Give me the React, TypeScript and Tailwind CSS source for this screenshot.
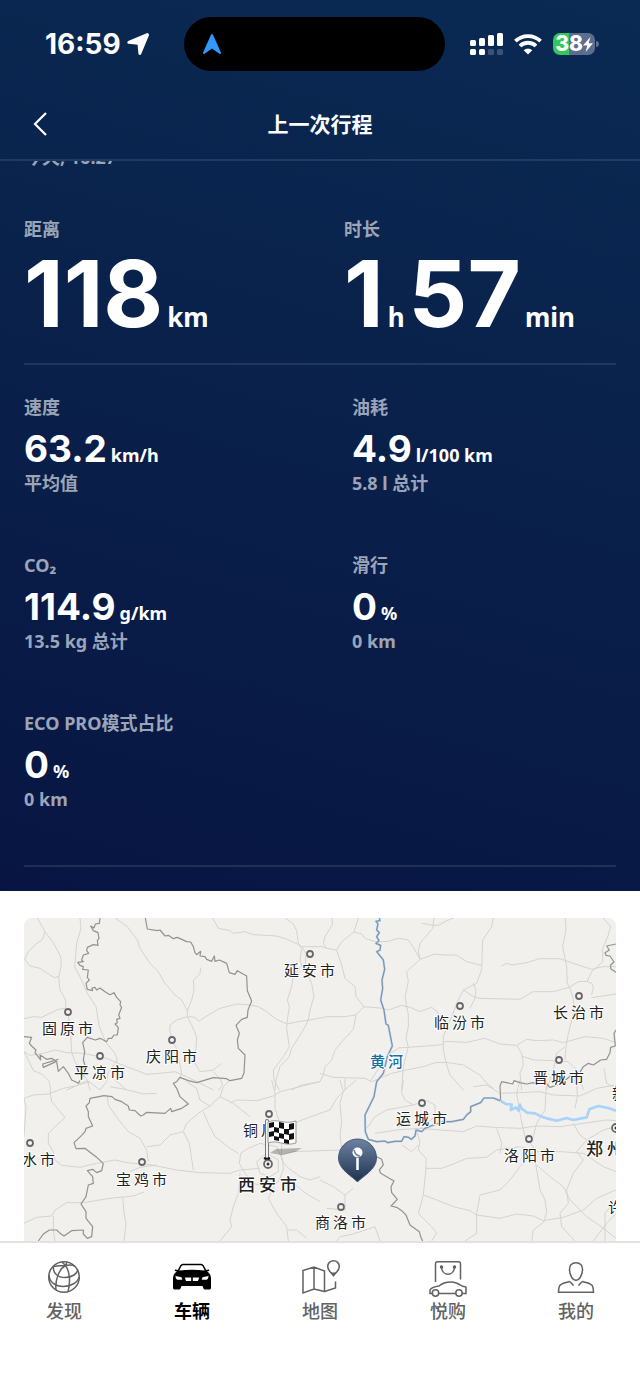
import type { ReactNode } from 'react';

type Metric = {
    label: string;
    value: string;
    unit: string;
    note: string;
};

const metrics: Metric[] = [
    { label: '速度', value: '63.2', unit: 'km/h', note: '平均值' },
    { label: '油耗', value: '4.9', unit: 'l/100 km', note: '5.8 l 总计' },
    { label: 'CO₂', value: '114.9', unit: 'g/km', note: '13.5 kg 总计' },
    { label: '滑行', value: '0', unit: '%', note: '0 km' },
    { label: 'ECO PRO模式占比', value: '0', unit: '%', note: '0 km' },
];

type City = { name: string; x: number; y: number; dotX: number; dotY: number; big?: boolean };

const cities: City[] = [
    { name: '固原市', x: 18, y: 116, dotX: 44, dotY: 94 },
    { name: '平凉市', x: 50, y: 160, dotX: 76, dotY: 138 },
    { name: '庆阳市', x: 122, y: 144, dotX: 148, dotY: 122 },
    { name: '延安市', x: 260, y: 58, dotX: 286, dotY: 36 },
    { name: '临汾市', x: 410, y: 110, dotX: 436, dotY: 88 },
    { name: '长治市', x: 529, y: 100, dotX: 555, dotY: 78 },
    { name: '晋城市', x: 509, y: 165, dotX: 535, dotY: 142 },
    { name: '运城市', x: 372, y: 206, dotX: 398, dotY: 185 },
    { name: '铜川市', x: 219, y: 218, dotX: 245, dotY: 196 },
    { name: '天水市', x: -20, y: 247, dotX: 6, dotY: 225 },
    { name: '宝鸡市', x: 92, y: 267, dotX: 118, dotY: 244 },
    { name: '洛阳市', x: 480, y: 243, dotX: 505, dotY: 221 },
    { name: '商洛市', x: 291, y: 310, dotX: 317, dotY: 289 },
    { name: '新乡市', x: 588, y: 181, dotX: 614, dotY: 160 },
    { name: '许昌市', x: 584, y: 295, dotX: 610, dotY: 273 },
    { name: '西安市', x: 214, y: 273, dotX: 244, dotY: 246, big: true },
    { name: '郑州市', x: 562, y: 237, dotX: 592, dotY: 210, big: true },
];

function StatusBar() {
    return (
        <div className="flex h-[88px] items-center pl-[45px]">
            <div className="flex w-[139px] items-center gap-[6px]">
                <span className="font-['Inter',sans-serif] text-[28px] leading-8 font-bold">16:59</span>
                <svg viewBox="0 0 22 22" className="size-[22px]" fill="currentColor">
                    <path
                        d="M20 .9 1.500 8.800c-.7.400-.6 1.200.2 1.300L11 11c.2 0 .3.100.3.300l.9 9.300c.1.700 1 .800 1.300.200L21.200 2.200c.3-.8-.400-1.600-1.200-1.300Z"
                        stroke="currentColor"
                        strokeWidth="1.500"
                        strokeLinejoin="round"
                    />
                </svg>
            </div>
            <div className="flex h-[54px] w-[261px] items-center rounded-full bg-black pl-[18px]">
                <svg viewBox="0 0 20 22" className="h-[22px] w-5" fill="#3398fb">
                    <path d="M9 1.800c.4-1.200 1.600-1.200 2 0l7.900 17.600c.5 1.200-.6 2-1.500 1.300L10 15.400l-7.400 5.300c-.9.700-2-.1-1.500-1.300Z" />
                </svg>
            </div>
            <div className="ml-[25px] flex items-center gap-[11px]">
                <svg viewBox="0 0 33 23" className="h-[23px] w-[33px]" fill="currentColor">
                    <rect x="0" y="7" width="6" height="6" rx="1.500" />
                    <rect x="9" y="5" width="6" height="8" rx="1.500" />
                    <rect x="18" y="2" width="6" height="11" rx="1.500" />
                    <rect x="27" y="0" width="6" height="13" rx="1.500" />
                    <rect x="0" y="16" width="6" height="6" rx="1.500" />
                    <rect x="9" y="16" width="6" height="6" rx="1.500" />
                    <rect x="18" y="16" width="6" height="6" rx="1.500" opacity=".2" />
                    <rect x="27" y="16" width="6" height="6" rx="1.500" opacity=".2" />
                </svg>
                <svg viewBox="0 0 28 21" className="h-[21px] w-7" fill="none" stroke="currentColor" strokeWidth="3.800">
                    <path d="M1.400 7.200a18 18 0 0 1 25.200 0" />
                    <path d="M6 12a11.500 11.500 0 0 1 16 0" />
                    <path d="M14 20.500 9.700 16.300a6.200 6.200 0 0 1 8.600 0Z" fill="currentColor" stroke="none" />
                </svg>
                <div className="flex items-center gap-px">
                    <div className="flex h-[22px] w-[42px] items-center justify-center rounded-[7px] bg-linear-to-r from-[#34c759] from-38% to-[#5b6e8f] to-38%">
                        <span className="font-['Inter',sans-serif] text-[21px] leading-[22px] font-extrabold">38</span>
                        <svg viewBox="0 0 10 15" className="h-[15px] w-[10px]" fill="currentColor">
                            <path d="M7.300 0 0 8.600h4.300L2.600 15 10 6.200H5.700Z" />
                        </svg>
                    </div>
                    <div className="h-[6px] w-[3px] rounded-r-full bg-[#5b6e8f]" />
                </div>
            </div>
        </div>
    );
}

function Header() {
    return (
        <header>
            <StatusBar />
            <div className="grid h-[71px] grid-cols-[64px_1fr_64px] items-center">
                <button type="button" aria-label="返回" className="flex h-full items-center pl-[33px]">
                    <svg viewBox="0 0 14 24" className="h-6 w-[14px]" fill="none" stroke="currentColor" strokeWidth="2.200">
                        <path d="M13 1 2 12l11 11" />
                    </svg>
                </button>
                <h1 className="text-center text-[21px] leading-8 font-semibold">上一次行程</h1>
            </div>
        </header>
    );
}

function Figure({ children }: { children: ReactNode }) {
    return <span className="font-['Inter',sans-serif] text-[92px] leading-[96px]">{children}</span>;
}

function Unit({ children }: { children: ReactNode }) {
    return <span className="text-[26px] leading-8">{children}</span>;
}

function Summary() {
    return (
        <div className="grid grid-cols-2 gap-12 border-b-2 border-white/10 pb-[21px]">
            <div>
                <h2 className="text-[18px] leading-7 font-bold text-[#9ba5b7]">距离</h2>
                <p className="mt-[3px] flex items-baseline gap-1 font-bold">
                    <Figure>118</Figure>
                    <Unit>km</Unit>
                </p>
            </div>
            <div>
                <h2 className="text-[18px] leading-7 font-bold text-[#9ba5b7]">时长</h2>
                <p className="mt-[3px] flex items-baseline gap-1 font-bold">
                    <Figure>1</Figure>
                    <Unit>h</Unit>
                    <Figure>57</Figure>
                    <Unit>min</Unit>
                </p>
            </div>
        </div>
    );
}

function MetricItem({ metric }: { metric: Metric }) {
    return (
        <div className="h-[126px]">
            <h2 className="text-[18px] leading-7 font-bold text-[#9ba5b7]">{metric.label}</h2>
            <p className="mt-[10px] flex items-baseline gap-1 leading-9 font-bold">
                <span className="font-['Inter',sans-serif] text-[37px]">{metric.value}</span>
                <span className="text-[18px]">{metric.unit}</span>
            </p>
            <p className="text-[18px] leading-5 font-bold text-[#9ba5b7]">{metric.note}</p>
        </div>
    );
}

function RouteMap() {
    return (
        <svg
            viewBox="0 0 592 323"
            preserveAspectRatio="xMidYMid slice"
            className="h-[323px] w-full rounded-t-[8px] bg-[#f1f0ed]"
            role="img"
            aria-label="行程地图"
        >
            <defs>
                <linearGradient id="pin" x1="0" y1="0" x2="0" y2="1">
                    <stop offset="0" stopColor="#6d82a0" />
                    <stop offset="1" stopColor="#1c3350" />
                </linearGradient>
            </defs>
            {/* line work is drawn at three units per pixel, in four tiles */}
            <g transform="translate(-24 -18) scale(.33333)" fill="none" strokeLinejoin="round">
                {/* roads */}
                <g stroke="#d3d3d1" strokeWidth="3">
                    <g>
                        <path d="M112 54 135 95 160 128 182 170 184 195 176 232 180 270 197 300 197 325 205 345 212 400 215 457 225 485 240 510 262 540 270 570" />
                        <path d="M135 95 128 118 108 132 85 155 74 178 90 198 120 205 145 222 165 234 176 228" />
                        <path d="M240 54 243 85 230 130 224 200 245 240 262 280 288 320 298 380 318 428 345 460 352 480 345 490 325 515 320 545 300 570" />
                        <path d="M72 356 100 350 125 352 150 340 175 328 197 325" />
                        <path d="M72 455 90 466 130 460 165 450 200 458 250 460 320 475 380 500 440 523 480 520 525 515 560 530 620 560 640 570" />
                        <path d="M72 455 90 490 100 512 125 522 148 545 152 570M200 570 230 557 262 542 300 570M345 540 380 570" />
                        <path d="M345 54 382 80 412 120 420 145 450 190 475 215 495 250 525 285 545 300 562 332 562 350 575 375 590 412 585 490 600 515 640 510 665 490" />
                        <path d="M602 203 600 222 580 240 582 270 575 300 562 332M562 350 530 360 510 375 510 395 520 430 530 445 545 520 540 535" />
                        <path d="M562 350 585 352 595 364 630 342 660 325 710 312 752 315 775 320 800 335 830 358 860 372 895 365 930 360 960 354" />
                        <path d="M638 54 655 85 690 92 700 100 735 95 760 104 830 108 862 118 892 132 905 140 960 140" />
                        <path d="M855 54 880 72 890 92 895 130 905 145 900 180 905 198 880 225 875 260 862 300 868 320 862 360 860 385 868 440 850 470 820 510 822 540 838 570" />
                        <path d="M905 140 918 160 915 210 935 250 942 290 930 330 925 360 910 390 875 445 868 470 840 500 828 540 825 570M875 570 905 555 960 545" />
                        <path d="M640 515 662 540 668 555 655 570" />
                    </g>
                    <g transform="translate(960 0)">
                        <path d="M35 54 38 72 15 110 10 130 20 145 50 150 65 125 102 96 115 54M102 96 125 102 135 115 168 126 205 124 235 115 265 120 285 150 300 178" />
                        <path d="M0 138 20 145M50 150 65 195 75 235 105 260 108 290 132 320 108 345 75 350 20 350 0 355M108 345 100 388 70 420 45 450 35 480 15 500 10 525 0 545" />
                        <path d="M132 320 190 325 205 330 245 316 270 322 300 335 335 322 352 335 358 350M300 178 260 215 265 245 255 290 265 345 265 380 258 415 265 440 250 500 245 570" />
                        <path d="M342 54 338 85 300 130 295 155 300 178 345 162 370 165 410 165 440 185 485 196M306 70 338 76 355 76 380 62 402 54" />
                        <path d="M520 54 515 80 488 120 486 180 485 210 470 250 430 270 410 310 395 350 370 410 370 450 378 487 390 525 430 570" />
                        <path d="M430 270 460 290 480 295 600 298 640 275 700 275 748 262 775 245 800 244 815 250 820 260 815 285M460 250 468 270 465 295 450 325M815 293 888 282" />
                        <path d="M736 54 738 90 728 140 740 200 742 250 752 270 760 300 762 335 745 400 738 440 735 480" />
                        <path d="M544 198 560 190 575 195 620 188 660 176 720 176 760 190 815 208 848 200 888 200M850 54 872 80 865 105 848 145 848 185 815 215 802 244" />
                        <path d="M150 545 200 470 235 444 320 438 365 434 375 424 440 427 495 415 540 432 590 436 620 418 650 422 700 420 730 428 795 410 850 415 888 428" />
                        <path d="M0 520 40 532 135 535 155 545 215 520 260 510 310 500 345 488 378 487 430 495 480 525 500 550 520 565M75 535 75 570M590 436 605 460 610 495 600 520 605 570" />
                        <path d="M605 468 640 480 700 482 745 485 770 510 785 550 790 570M735 440 710 460 700 510 680 570M852 505 860 550 888 565" />
                    </g>
                    <g transform="translate(0 540)">
                        <path d="M72 55 100 45 145 42 190 25 225 18 270 5M72 55 78 80 72 170M150 30 155 65 195 112 145 160 145 190 160 215 165 240 185 256 240 262 290 250 345 240 380 248 450 254 530 270 600 278 690 280 720 270 780 265" />
                        <path d="M322 48 325 75 350 112 385 155 420 175 440 210 445 245M440 200 480 195 510 165 550 155 560 130 595 100 630 78 660 50 670 20 690 0M550 155 568 190 580 270M390 275 420 262 470 255" />
                        <path d="M330 20 375 28 430 42 470 40M560 5 590 25 600 60 630 78M660 50 700 70 725 90 750 110M610 95 625 130 645 170 690 205 715 220M690 70 710 60 770 62 820 48 840 35 960 5" />
                        <path d="M72 430 110 412 155 408 165 390 200 368 250 368 330 355 400 348 432 336M160 408 160 450 165 483M368 350 372 400 378 430 372 483M720 280 715 340 700 380 690 420 695 440 660 483" />
                        <path d="M815 0 825 40 825 85 840 130 845 200 845 240 860 260 900 290 930 300 960 290M845 225 880 215 960 212M880 130 960 100" />
                        <path d="M780 190 745 205 722 220 718 250 735 280 760 310 800 320 835 305 850 270 848 240 830 200 780 190M770 245 800 220 835 240 835 275 810 290 780 280ZM805 355 830 400 860 440 865 483M865 450 890 450 920 475M805 355 822 320M870 300 905 330 925 345 960 365" />
                    </g>
                    <g transform="translate(960 540)">
                        <path d="M60 0 70 35 60 70 65 130 60 160 65 210M0 100 30 90 50 55 85 20 110 0M0 212 65 210M250 0 245 40 255 60 280 75M140 145 165 110 200 90 280 75 320 62 345 75 345 110 290 155" />
                        <path d="M165 160 230 150 300 145 360 150 430 155 470 138 520 142 600 145 650 138 720 140 790 130 860 120 888 122M290 155 300 185 295 210 318 235 318 265 310 345 295 400 335 440 350 460 335 483M245 195 275 215 295 195" />
                        <path d="M318 265 365 265 400 252 440 235 500 232 530 210 600 200 650 215 725 215 790 220M530 145 545 190 540 220M310 345 350 360 400 380 450 392 470 405 540 415 590 402 640 408 670 422 730 412 790 390 830 355 888 330" />
                        <path d="M600 0 590 40 600 100 610 150 615 170 640 200 650 270 660 330 675 360 680 395 672 425 640 450 635 483M640 215 600 260 570 300 540 330 480 345 470 400 470 460 435 483M650 255 690 290 730 320 750 360 800 410 850 445 888 475" />
                        <path d="M680 0 675 90 650 130 640 170M760 130 780 165 800 180 770 215 790 240 760 280 740 330 745 370 720 400 725 440 765 483M800 180 850 150 888 140M790 220 850 260 888 275M888 400 860 430 820 483M855 483 855 400 888 360" />
                        <path d="M460 20 500 15 540 40 600 38 660 35 700 45 780 48 830 25 888 15M770 0 772 50 765 85M0 300 40 320 75 345 100 325M75 345 75 390 20 385M50 483 60 470 100 462 165 440 180 483" />
                    </g>
                </g>
                {/* province borders */}
                <g stroke="#929292" strokeWidth="3.600">
                    <path d="M300 54 298 70 286 72 282 84 272 78 280 92 294 98 297 115 292 122 294 136 280 134 262 142 260 152 266 160 250 165 245 180 250 185 233 187 240 196 250 200 248 208 265 210 262 232 268 240 258 250 262 268 278 272 276 264 285 262 290 270 300 264 315 275 330 284 342 278 350 292 362 305 360 315 365 322 356 345 360 355 350 358 352 368 345 372 355 382 352 405 342 405 335 415 325 415 320 425 300 415 286 420 262 412 248 428 254 455 250 480 256 500 246 512 250 525 235 550 215 540 205 520 190 500 175 514 170 485 155 475 140 478 120 465 122 480 105 458 108 450 95 438 88 430 95 412 72 410" />
                    <path d="M175 478 128 492 130 502 168 485M436 54 442 87 472 92 480 90 495 108 505 106 520 116 532 112 560 125 572 126 580 140 585 158 590 164 602 154 600 168 615 170 620 178 635 184 643 168 645 184 658 180 680 190 688 218 705 223 712 212 740 228 742 272 755 303 744 330 742 352 725 358 708 376 718 400 712 420 715 445 735 465 732 520 725 535 690 542 680 536 640 533 590 548 565 542 540 532 530 545 520 550 530 565 540 590 565 612 545 625 515 635 512 625 495 640 440 637 430 645 422 648 405 632 388 630 385 618 365 605 345 598 336 590 312 587 270 595 268 608 258 618 265 635 265 650 278 678 258 685 255 695 245 706 222 728 228 746 255 745 268 755 290 772 310 790 305 812 290 818 278 808 262 812 278 830 280 850 265 855 258 890 243 912 258 935 258 955 278 980 275 1010 262 1015 250 1002 250 990 215 992 192 1008 178 998 170 990 148 990 130 1002 115 1023" />
                    <path d="M1848 132 1820 138 1828 150 1815 158 1818 166 1830 168 1842 186 1832 195 1832 206 1848 217M1848 390 1842 400 1846 438 1832 442 1830 458 1820 478 1802 480 1780 495 1765 490 1750 500 1738 520 1715 525 1690 545 1680 552 1650 562 1640 552 1610 553 1600 548 1580 552 1560 548 1542 542 1538 552 1505 545 1500 558 1502 602" />
                    <path d="M1130 770 1145 778 1150 795 1138 810 1142 820 1160 830 1182 843 1173 860 1175 878 1192 898 1173 918 1190 922 1205 932 1218 945 1230 975 1258 995 1262 1010 1268 1023" />
                </g>
                {/* Yellow River */}
                <path d="M1500 602 1518 612 1535 614 1532 630 1548 622 1556 632 1560 614 1566 628 1575 632 1580 638 1605 640 1625 650 1640 655 1670 662 1700 654 1720 660 1760 652 1768 628 1795 618 1825 624 1848 632" stroke="#a9d3f8" strokeWidth="8" />
                <path d="M1138 54 1140 62 1128 64 1134 72 1130 90 1138 98 1130 110 1137 122 1128 130 1142 136 1140 150 1130 155 1150 180 1154 208 1146 240 1148 265 1142 300 1152 330 1158 372 1165 376 1177 438 1162 470 1150 520 1130 545 1122 590 1095 645 1096 695 1105 718 1130 725 1155 723 1163 728 1185 724 1205 724 1212 710 1225 712 1234 718 1245 708 1248 690 1265 695 1275 685 1300 675 1330 665 1355 665 1390 658 1400 645 1412 635 1412 620 1442 608 1452 594 1480 594 1500 602" stroke="#a9d3f8" strokeWidth="6" />
                <path d="M1138 54 1140 62 1128 64 1134 72 1130 90 1138 98 1130 110 1137 122 1128 130 1142 136 1140 150 1130 155 1150 180 1154 208 1146 240 1148 265 1142 300 1152 330 1158 372 1165 376 1177 438 1162 470 1150 520 1130 545 1122 590 1095 645 1096 695 1105 718 1130 725 1155 723 1163 728 1185 724 1205 724 1212 710 1225 712 1234 718 1245 708 1248 690 1265 695 1275 685 1300 675 1330 665 1355 665 1390 658 1400 645 1412 635 1412 620 1442 608 1452 594 1480 594 1500 602" stroke="#8494a4" strokeWidth="3.600" />
            </g>
            {cities.map((city) => (
                <g key={city.name}>
                    <circle cx={city.dotX} cy={city.dotY} r={city.big ? 5 : 4} fill="#fff" />
                    <circle cx={city.dotX} cy={city.dotY} r={city.big ? 4 : 3} fill="#f4f4f2" stroke="#66666a" strokeWidth="1.800" />
                    {city.big && <circle cx={city.dotX} cy={city.dotY} r="1.500" fill="#333" />}
                </g>
            ))}
            <g className="font-['Noto_Sans_CJK_SC',sans-serif]" fill="#222" stroke="#fff" strokeWidth="2" paintOrder="stroke">
                {cities.map((city) => (
                    <text
                        key={city.name}
                        x={city.x}
                        y={city.y}
                        className={city.big ? 'text-[17px] font-medium tracking-[4px]' : 'text-[15px] tracking-[3px]'}
                    >
                        {city.name}
                    </text>
                ))}
                <text x="346" y="149" fill="#16719f" className="text-[15px] font-medium tracking-[3px]">
                    黄河
                </text>
            </g>
            {/* finish flag */}
            <path d="m246 235 6-4 26-1-7 4-14 3Z" fill="#000" opacity=".25" />
            <path d="M243 203v38" stroke="#777" strokeWidth="4" strokeLinecap="round" />
            <path d="M243 203v38" stroke="#f2f2f2" strokeWidth="2" strokeLinecap="round" />
            <path d="M244 204c9-4 16 3 28-1v22c-12 4-19-4-28 0Z" fill="#fff" stroke="#999" />
            <path
                d="M245 205l5-1v5l-5 1ZM255 204l5 1v6l-5-1ZM265 206l5-1v6l-5 1ZM250 209l5 1v5l-5-1ZM260 211l5 0v6l-5-1ZM245 214l5-1v5l-5 1ZM255 215l5 1v5l-5-1ZM265 216l5-1v6l-5 1ZM250 218l5 1v4l-5-1ZM260 221l5 1v4l-5-1Z"
                fill="#111"
            />
            <path d="M240 240c2 1 4 1 6 0" stroke="#111" strokeWidth="2" fill="none" />
            {/* start pin */}
            <path d="M333.500 264c-4-5-19-12-19-24a19 19 0 0 1 38 0c0 12-15 19-19 24Z" fill="url(#pin)" stroke="#43597a" />
            <circle cx="333.500" cy="234.500" r="5" fill="#fff" />
            <path d="M330 232c1 4 3 6 6 6" stroke="#6d82a0" strokeWidth="1.500" fill="none" />
            <path d="M333.500 240v12" stroke="#fff" strokeWidth="2.500" />
        </svg>
    );
}

function DiscoverIcon() {
    return (
        <svg viewBox="0 0 40 40" className="size-10" fill="none" stroke="currentColor" strokeWidth="1.500">
            <circle cx="20" cy="20" r="15.300" />
            <path d="M21.500 8.500C15 12 11 23 12 33M21.500 8.500c4.500 6 5 17 2.500 26.300M21.500 8.500 23 5M21.500 8.500c4.500-.8 7.500-.5 9.500.8M21.500 8.500C16 8.500 12 9 9.500 9.500M21.500 8.500 18 5" />
            <path d="M9.500 9.500C8.500 16 14 20.500 21 20.500s13-4 12.500-8M5 18c0 7 7 11.500 14 11.500S34 26 35 20" />
        </svg>
    );
}

function CarIcon() {
    return (
        <svg viewBox="0 0 40 40" className="size-10" fill="currentColor">
            <path
                fillRule="evenodd"
                d="M11 6.800h18c1.600 0 2.500 1 3.200 2.400l2 3.800 2-.6c1-.2 1.500 1.400.5 1.600l-1.600.4c2.500 1.600 3.900 3.600 3.900 7v9c0 1.600-.6 2-2 2h-3.500c-1.400 0-2-.4-2.400-2L30.500 29h-21l-.6 1.400c-.4 1.600-1 2-2.400 2H3c-1.400 0-2-.4-2-2v-9c0-3.400 1.400-5.400 3.900-7l-1.600-.4c-1-.2-.5-1.800.5-1.600l2 .6 2-3.800C8.500 7.800 9.400 6.800 11 6.800Zm0 1.500c-1 0-1.500.7-2 1.700L7.300 13.600c8-1.200 17.400-1.200 25.400 0L31 10c-.5-1-1-1.700-2-1.700Z"
            />
            <path d="m3.500 19 6 1.200.8 2.600H5.200C4 22 3.500 20.500 3.500 19ZM36.500 19l-6 1.200-.8 2.600h5.100c1.200-.8 1.700-2.300 1.700-3.800ZM12.800 20.500h6.400v3.500h-5.200ZM20.800 20.500h6.400L26 24h-5.200Z" fill="#fff" />
        </svg>
    );
}

function MapIcon() {
    return (
        <svg viewBox="0 0 40 40" className="size-10" fill="none" stroke="currentColor" strokeWidth="1.500">
            <path d="M3 13.500 14 10l10.500 4v20.500L14 32 3 36ZM14 10v22M24.500 34.500 35.500 31V24.500" />
            <path d="M34.500 20.500c-2-3-5.800-4.500-5.800-9a5.800 5.800 0 0 1 11.600 0c0 4.500-3.800 6-5.800 9Z" transform="translate(-1 -2)" />
            <path d="M30.500 15.500h6l-3 4Z" fill="currentColor" stroke="none" />
        </svg>
    );
}

function ShopIcon() {
    return (
        <svg viewBox="0 0 40 40" className="size-10" fill="none" stroke="currentColor" strokeWidth="1.500">
            <path d="M7.500 25V7c0-1.400.7-2.200 2-2.200h21c1.300 0 2 .8 2 2.200v15.500" />
            <path d="M13.500 10.500c1 9 12 9 13 0" />
            <circle cx="13.500" cy="10" r="1" fill="currentColor" />
            <circle cx="26.500" cy="10" r="1" fill="currentColor" />
            <path d="M4.200 36.500H2V33c1-2.500 4-3.300 9-4 4-3.500 8-4 12-4 5 0 8 2 11 4l4 1v6.500h-3.500M10.800 36.500h17" />
            <circle cx="7.500" cy="36" r="3.200" />
            <circle cx="31" cy="36" r="3.200" />
        </svg>
    );
}

function ProfileIcon() {
    return (
        <svg viewBox="0 0 40 40" className="size-10" fill="none" stroke="currentColor" strokeWidth="1.500">
            <path d="M20 5.700c4.500 0 6.700 3 6.500 7-.2 5-2.800 10.600-6.500 10.600s-6.300-5.600-6.500-10.600c-.2-4 2-7 6.500-7Z" />
            <path d="M17.500 28.500c-1.500-1.500-2.200-2.800-4-4C9.500 26 4.500 26 3.300 29.500c-.7 2-.8 4-.8 5.800h35c0-1.800-.1-3.800-.8-5.800C35.500 26 30.500 26 26.500 24.500c-1.800 1.200-2.500 2.500-4 4" />
        </svg>
    );
}

const tabs = [
    { label: '发现', icon: <DiscoverIcon /> },
    { label: '车辆', icon: <CarIcon />, active: true },
    { label: '地图', icon: <MapIcon /> },
    { label: '悦购', icon: <ShopIcon /> },
    { label: '我的', icon: <ProfileIcon /> },
];

export default function App() {
    return (
        <div className="w-full bg-white font-['Noto_Sans','Noto_Sans_CJK_SC',sans-serif]">
            <div className="bg-linear-[195deg] from-[#0a2a53] via-[#09204a] to-[#081542] text-white">
                <Header />

                <main className="overflow-hidden border-t-2 border-white/10 px-6 pb-6">
                    {/* scrolled away under the header */}
                    <p className="-mt-[18px] text-[18px] leading-7 font-bold text-[#9ba5b7]">今天, 16:27</p>
                    <div className="mt-11">
                        <Summary />
                    </div>
                    <div className="grid grid-cols-2 gap-x-16 gap-y-8 border-b-2 border-white/10 pt-7 pb-[30px]">
                        {metrics.map((metric) => (
                            <MetricItem key={metric.label} metric={metric} />
                        ))}
                    </div>
                </main>
            </div>

            <section className="px-6 pt-[27px]">
                <RouteMap />
            </section>

            <nav className="grid grid-cols-5 border-t-2 border-[#e2e2e2] pt-[14px] pb-[60px]">
                {tabs.map((tab) => (
                    <a
                        key={tab.label}
                        href="#"
                        className={`flex flex-col items-center text-[18px] leading-7 ${tab.active ? 'font-bold text-black' : 'font-medium text-[#626262]'}`}
                    >
                        {tab.icon}
                        {tab.label}
                    </a>
                ))}
            </nav>
        </div>
    );
}
